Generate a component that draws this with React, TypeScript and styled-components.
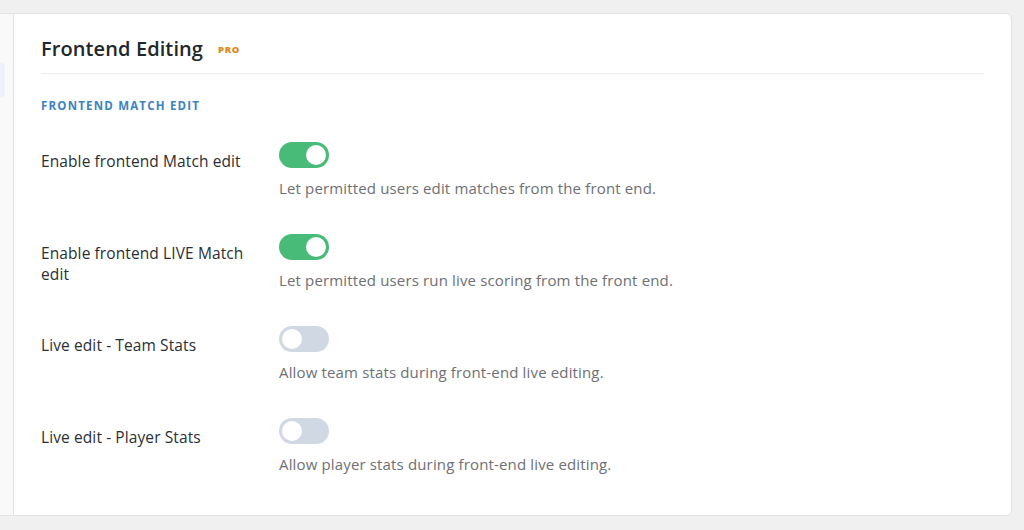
import styled, { createGlobalStyle } from "styled-components"

const GlobalStyle = createGlobalStyle`
  html, body {
    margin: 0;
    padding: 0;
    background: #f0f0f1;
    font-family: "Open Sans", "Noto Sans", sans-serif;
  }
`

const Page = styled.div`
  display: flex;
  height: 530px;
  padding: 13px 12px 14px 0;
  box-sizing: border-box;
`

const Sidebar = styled.aside`
  width: 13px;
  flex-shrink: 0;
  background: #f9f9fa;
  border-top: 1px solid #e4e4e6;
  border-bottom: 1px solid #e4e4e6;
  box-sizing: border-box;
  padding-top: 49px;
`

const SidebarItem = styled.div`
  width: 5px;
  height: 34px;
  background: #eef3fb;
  border-radius: 0 3px 3px 0;
`

const Card = styled.section`
  flex: 1;
  background: #ffffff;
  border: 1px solid #e2e2e4;
  border-radius: 0 6px 6px 0;
  padding: 20px 27px 0 27px;
  box-sizing: border-box;
`

const Header = styled.header`
  display: flex;
  align-items: center;
  gap: 15px;
  height: 28px;
  padding-bottom: 11px;
  border-bottom: 1px solid #ececee;
`

const Title = styled.h1`
  margin: 0;
  font-size: 20px;
  font-weight: 600;
  color: #23272d;
  letter-spacing: 0.1px;
`

const ProBadge = styled.span`
  font-size: 9.5px;
  font-weight: 800;
  color: #d98a16;
  letter-spacing: 0.6px;
  margin-top: 2px;
`

const SectionHeading = styled.h2`
  margin: 24px 0 28px;
  font-size: 11.5px;
  line-height: 16px;
  font-weight: 700;
  letter-spacing: 1.2px;
  color: #3a84c2;
  text-transform: uppercase;
`

const Row = styled.div`
  display: grid;
  grid-template-columns: 238px 1fr;
  margin-bottom: 36px;
`

const Label = styled.div`
  padding-top: 9px;
  padding-right: 20px;
  font-size: 15.5px;
  line-height: 21px;
  font-weight: 500;
  letter-spacing: 0.1px;
  color: #2b2f35;
`

const Control = styled.div`
  display: flex;
  flex-direction: column;
  align-items: flex-start;
`

const Track = styled.button<{ $on: boolean }>`
  position: relative;
  width: 50px;
  height: 26px;
  border: none;
  padding: 0;
  border-radius: 13px;
  background: ${(p) => (p.$on ? "#48bb78" : "#cfd8e3")};
  cursor: pointer;

  &::after {
    content: "";
    position: absolute;
    top: 3px;
    left: ${(p) => (p.$on ? "27px" : "3px")};
    width: 20px;
    height: 20px;
    border-radius: 50%;
    background: #ffffff;
  }
`

const Description = styled.p`
  margin: 10px 0 0;
  font-size: 15px;
  line-height: 20px;
  letter-spacing: 0.15px;
  color: #6e7075;
`

const settings = [
  {
    label: "Enable frontend Match edit",
    description: "Let permitted users edit matches from the front end.",
    on: true,
  },
  {
    label: "Enable frontend LIVE Match edit",
    description: "Let permitted users run live scoring from the front end.",
    on: true,
  },
  {
    label: "Live edit - Team Stats",
    description: "Allow team stats during front-end live editing.",
    on: false,
  },
  {
    label: "Live edit - Player Stats",
    description: "Allow player stats during front-end live editing.",
    on: false,
  },
]

const App = (): JSX.Element => {
  return (
    <>
      <GlobalStyle />
      <Page>
        <Sidebar>
          <SidebarItem />
        </Sidebar>
        <Card>
          <Header>
            <Title>Frontend Editing</Title>
            <ProBadge>PRO</ProBadge>
          </Header>
          <SectionHeading>Frontend Match Edit</SectionHeading>
          {settings.map((s) => (
            <Row key={s.label}>
              <Label>{s.label}</Label>
              <Control>
                <Track $on={s.on} aria-pressed={s.on} />
                <Description>{s.description}</Description>
              </Control>
            </Row>
          ))}
        </Card>
      </Page>
    </>
  )
}

export default App
